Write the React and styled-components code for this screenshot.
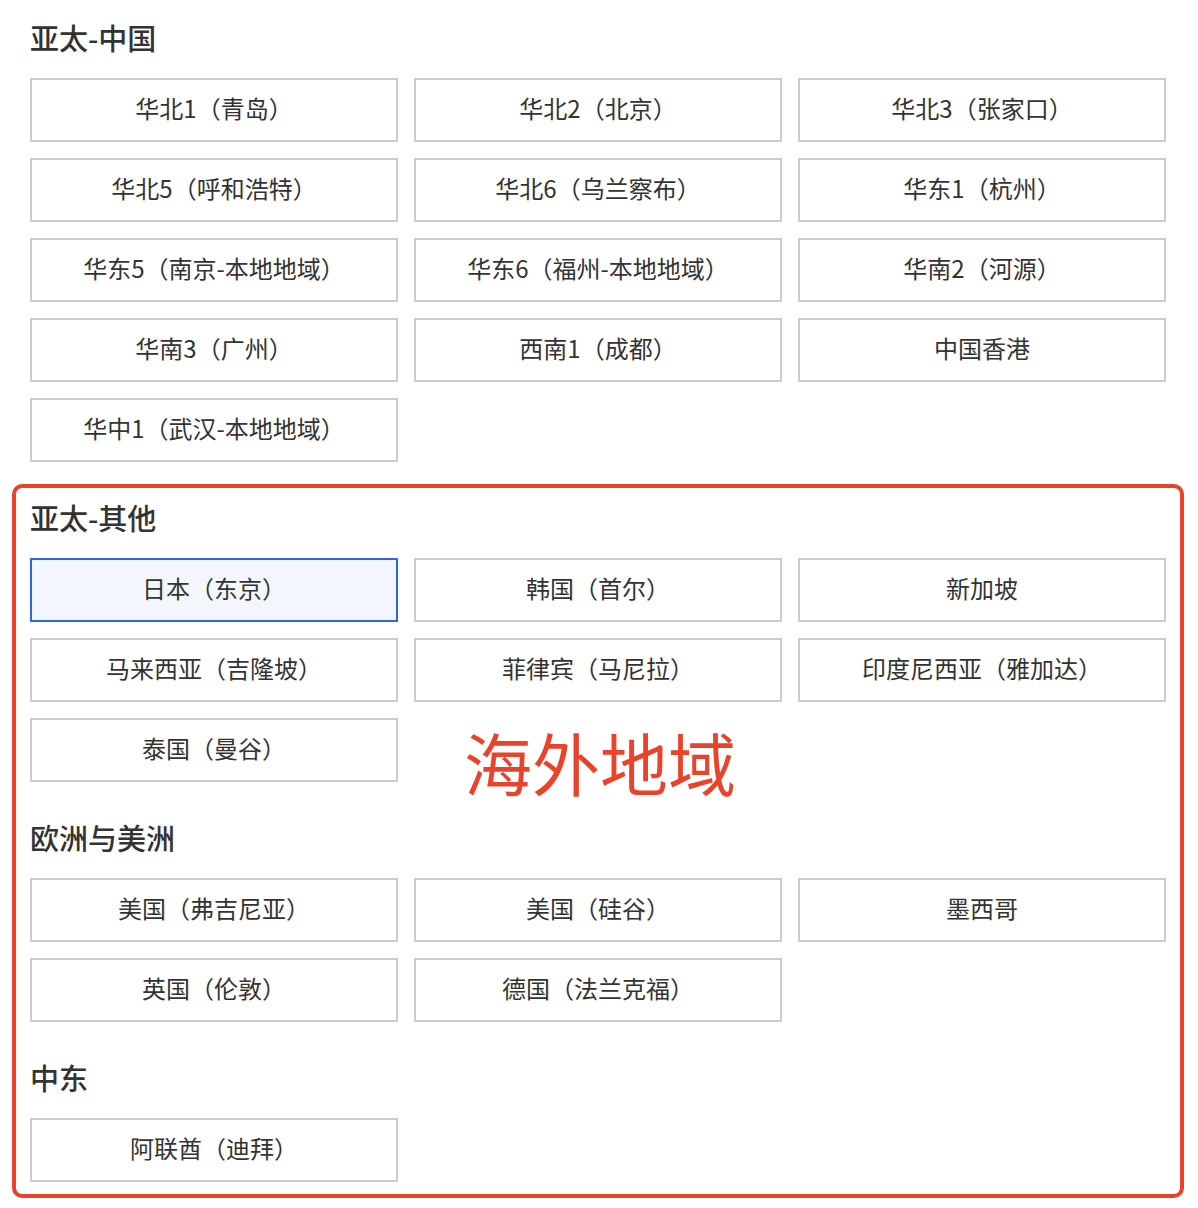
import React from "react";
import styled, { createGlobalStyle } from "styled-components";

const GlobalStyle = createGlobalStyle`
  html, body {
    margin: 0;
    padding: 0;
    background: #fff;
  }
  body {
    font-family: "Noto Sans CJK SC", "Noto Sans", sans-serif;
    color: #333;
  }
`;

const china = [
  "华北1（青岛）",
  "华北2（北京）",
  "华北3（张家口）",
  "华北5（呼和浩特）",
  "华北6（乌兰察布）",
  "华东1（杭州）",
  "华东5（南京-本地地域）",
  "华东6（福州-本地地域）",
  "华南2（河源）",
  "华南3（广州）",
  "西南1（成都）",
  "中国香港",
  "华中1（武汉-本地地域）",
];

const overseas = [
  {
    title: "亚太-其他",
    items: [
      "日本（东京）",
      "韩国（首尔）",
      "新加坡",
      "马来西亚（吉隆坡）",
      "菲律宾（马尼拉）",
      "印度尼西亚（雅加达）",
      "泰国（曼谷）",
    ],
  },
  {
    title: "欧洲与美洲",
    items: [
      "美国（弗吉尼亚）",
      "美国（硅谷）",
      "墨西哥",
      "英国（伦敦）",
      "德国（法兰克福）",
    ],
  },
  {
    title: "中东",
    items: ["阿联酋（迪拜）"],
  },
];

const App = () => {
  const selected = "日本（东京）";
  return (
    <Page>
      <GlobalStyle />
      <Section>
        <Heading>亚太-中国</Heading>
        <Grid>
          {china.map((name) => (
            <RegionButton key={name}>{name}</RegionButton>
          ))}
        </Grid>
      </Section>
      <Highlight>
        {overseas.map((group) => (
          <Section key={group.title}>
            <Heading>{group.title}</Heading>
            <Grid>
              {group.items.map((name) => (
                <RegionButton key={name} $active={name === selected}>
                  {name}
                </RegionButton>
              ))}
            </Grid>
          </Section>
        ))}
        <Note>海外地域</Note>
      </Highlight>
    </Page>
  );
};

const Page = styled.div`
  width: 1198px;
  box-sizing: border-box;
  padding: 18px 32px 10px 30px;
`;

const Section = styled.div`
  & + & {
    margin-top: 36px;
  }
`;

const Heading = styled.h2`
  margin: 0 0 20px;
  font-size: 29px;
  line-height: 38px;
  padding-bottom: 2px;
  font-weight: 500;
  color: #333;
`;

const Grid = styled.div`
  display: grid;
  grid-template-columns: repeat(3, 368px);
  gap: 16px;
`;

const RegionButton = styled.button`
  height: 64px;
  box-sizing: border-box;
  border: 2px solid ${(p) => (p.$active ? "#2f66e0" : "#cbcbcb")};
  background: ${(p) => (p.$active ? "#f3f6fd" : "#fff")};
  font-family: inherit;
  font-size: 24px;
  line-height: 1;
  color: #333;
  padding: 0 0 4px;
  cursor: pointer;
`;

const Highlight = styled.div`
  position: relative;
  margin: 22px -18px 0;
  padding: 10px 14px 12px;
  border: 4px solid #e9432b;
  border-radius: 10px;
`;

const Note = styled.div`
  position: absolute;
  left: 448px;
  top: 240px;
  font-size: 68px;
  line-height: 1;
  color: #e9432b;
`;

export default App;
